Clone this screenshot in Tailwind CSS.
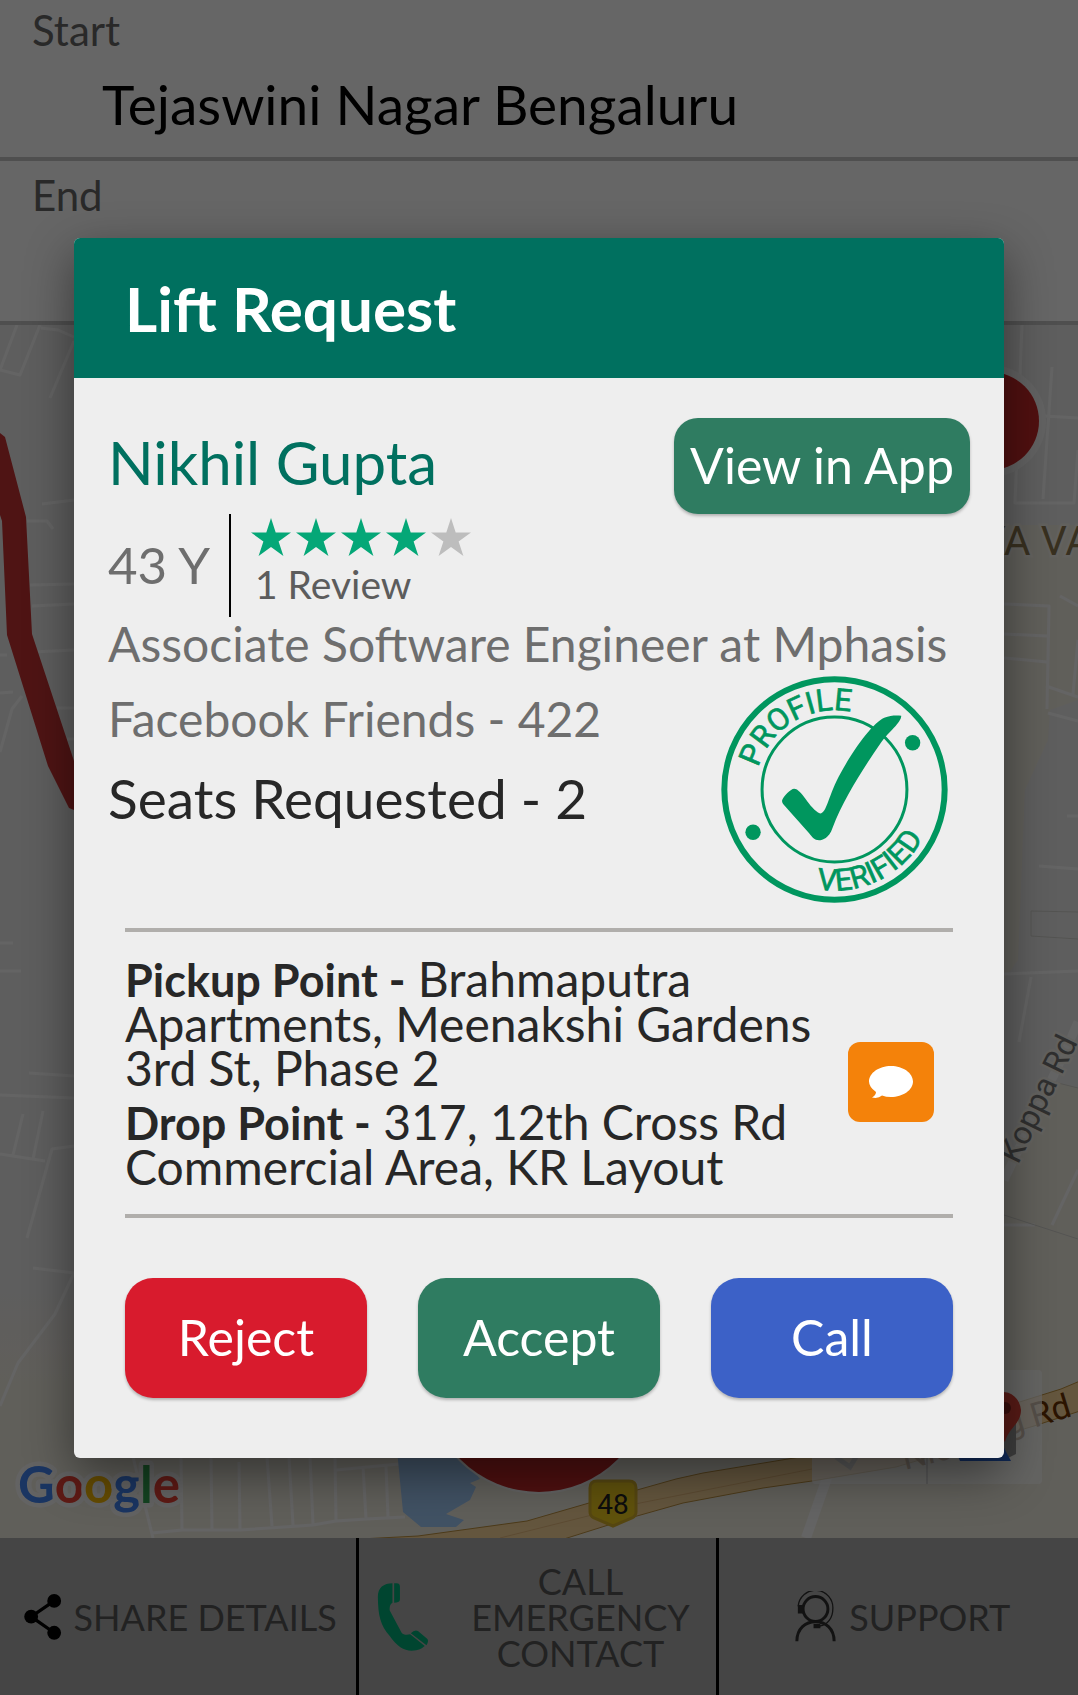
<!DOCTYPE html>
<html lang="en">
<head>
<meta charset="utf-8">
<meta name="viewport" content="width=device-width, initial-scale=1">
<title>Lift Request</title>
<script src="https://cdn.jsdelivr.net/npm/@tailwindcss/browser@4"></script>
</head>
<body class="relative flex min-h-screen flex-col bg-white font-['Lato',sans-serif]">

<!-- Trip screen behind the dialog -->
<main class="flex flex-1 flex-col">
  <section class="h-[161px] border-b-4 border-[#c6c6c6] px-8">
    <h2 class="pt-1 text-[42px] leading-[52px] text-[#676767]">Start</h2>
    <p class="pt-[22px] pl-[70px] text-[55px] leading-[52px] text-black">Tejaswini Nagar Bengaluru</p>
  </section>
  <section class="h-[164px] border-b-4 border-[#c6c6c6] px-8">
    <h2 class="pt-2 text-[42px] leading-[52px] text-[#676767]">End</h2>
  </section>

  <section class="min-h-[1213px] flex-1 bg-[#ebebeb]" aria-label="Map">
    <svg class="block h-full w-full" viewBox="0 325 1078 1213" preserveAspectRatio="xMidYMid slice">
      <defs>
        <linearGradient id="sand" x1="0" y1="0" x2="0" y2="1"><stop offset="0" stop-color="#ebebeb"/><stop offset=".4" stop-color="#f1ede2"/></linearGradient>
      </defs>
      <path d="M0 1280H600V1538H0Z" fill="url(#sand)"/>
      <path d="M990 525H1078V700L1050 710 1048 740 1025 790 1018 960 990 1000Z" fill="#f1ede2"/>
      <path d="M1078 1087L1054 1082 1030 1120 990 1190 400 1400V1538H1078Z" fill="#f1ede2"/>
      <g fill="none" stroke="#fafafa" stroke-width="3" stroke-linejoin="round">
        <path d="M17 325L0 370 20 375 40 325M41 328L58 330 74 337M74 341L50 398M42 504L74 500M27 521H47L53 529M30 585L74 584M32 606L74 604M0 655H7M33 652L74 650M57 708H74M67 739H74M0 693L13 692M0 752L12 709 22 696M0 943H13M0 971H21M29 1073L74 1076M0 1095L74 1098M0 1154L45 1161M23 1114L13 1155M43 1111L33 1159M27 1238L52 1149 74 1146M33 1268L74 1273 55 1314 18 1363 0 1406"/>
        <path d="M1022 324L1015 503H1074L1078 450M1052 367L1043 499M1045 416L1078 418M1004 604L1049 606 1047 709M1004 634L1047 636M1004 658L1047 662M1046 686L1078 697M1048 713L1078 721M1060 596L1078 606M1078 640L1073 694M1067 816H1078M1039 866L1078 869M1004 974L1078 971M1031 977L1019 1042M1004 1225H1035M1078 1170L1052 1225"/>
        <path d="M133 1457L153 1538M181 1457L182 1530M211 1457L212 1530M239 1462L240 1529M267 1457L272 1526M289 1457L293 1525M310 1457L313 1524M335 1457L336 1521M363 1466L366 1519M386 1466L388 1517M152 1533L182 1530 240 1530 313 1525 336 1521 366 1519 405 1517M336 1470L399 1464"/>
        <path d="M1078 1022L1068 1045 1004 1180" stroke-width="9"/>
        <path d="M828 1475L806 1538" stroke-width="10"/>
      </g>
      <path d="M1078 912L1031 911V936L1078 939M1054 1082L1078 1088M1004 1215L1078 1239" fill="none" stroke="#d2d2cd"/>
      <path d="M0 433L5 437 26 517 32 634 74 761V810L69 808 48 766 7 635 2 521 0 515Z" fill="#c63232"/>
      <circle cx="990" cy="421" r="56" fill="#f5f5f5"/>
      <circle cx="990" cy="421" r="49" fill="#c82828"/>
      <text x="981" y="555" font-family="Roboto" font-size="41" fill="#8c7850" stroke="#f5f2ea" stroke-width="5" paint-order="stroke">YA VA</text>
      <text transform="translate(1018 1165) rotate(-64)" font-family="Roboto" font-size="32" fill="#777" stroke="#f5f2ea" stroke-width="5" paint-order="stroke">Koppa Rd</text>
      <path d="M397 1450L403 1512 421 1527H456L464 1520 446 1514 470 1500 476 1487 470 1483 480 1479 458 1450Z" fill="#a3ccfa"/>
      <path d="M360 1539L418 1536 527 1521 589 1503 637 1490 676 1479 703 1473 800 1457 1010 1405 1061 1389 1080 1381V1411L1034 1426 896 1467 812 1481 763 1488 683 1503 637 1516 564 1539Z" fill="#fbd69c" stroke="#bd9240" stroke-width="1"/>
      <path d="M500 1538L640 1503 812 1469" fill="none" stroke="#e6bc7e"/>
      <circle cx="539" cy="1381" r="113" fill="#f5f5f5"/>
      <circle cx="539" cy="1381" r="111" fill="#c62828"/>
      <path d="M597 1481H629Q636 1481 636 1488V1512Q636 1516 632 1518L613 1526 594 1518Q590 1516 590 1512V1488Q590 1481 597 1481Z" fill="#f0cc1e" stroke="#d8b22c" stroke-width="3"/>
      <text x="613" y="1514" text-anchor="middle" font-family="Roboto" font-size="28" fill="#222">48</text>
      <g font-family="Roboto" font-size="34" fill="#6b3400">
        <text transform="translate(1073 1416) rotate(-17)" text-anchor="end">g Rd</text>
        <text transform="translate(905 1470) rotate(-14)">Nic</text>
      </g>
      <rect x="812" y="1370" width="230" height="114" rx="4" fill="#fff" fill-opacity=".7"/>
      <path d="M927 1372V1484" stroke="#ddd" stroke-width="2"/>
      <path d="M836 1457L850 1467 856 1457" fill="none" stroke="#ddd" stroke-width="5"/>
      <path d="M1000 1440L1016 1416V1454L1008 1458Z" fill="#999"/>
      <path d="M955 1450L1004 1448 1011 1461H960Z" fill="#2a66d8"/>
      <path d="M985 1414A18 20 0 0 1 1021 1410C1021 1424 1008 1428 1005 1442Z" fill="#db4437"/>
      <circle cx="1005" cy="1408" r="6" fill="#8c241e"/>
      <text x="18" y="1503" font-family="Lato" font-weight="700" font-size="51" stroke="#f8f8f8" stroke-width="9" stroke-linejoin="round" paint-order="stroke"><tspan fill="#4285f4">G</tspan><tspan fill="#ea4335">o</tspan><tspan fill="#fbbc05">o</tspan><tspan fill="#4285f4">g</tspan><tspan fill="#34a853">l</tspan><tspan fill="#ea4335">e</tspan></text>
    </svg>
  </section>

  <footer class="grid h-[157px] grid-cols-3 divide-x-3 divide-black bg-[#adadad] text-[36px] leading-9 text-[#555]">
    <button class="flex items-center justify-center gap-3 pl-1 whitespace-nowrap">
      <svg class="h-[46px] w-[38px] shrink-0" viewBox="84 434 112 140"><path d="M174 455L104 503 174 552" fill="none" stroke="#000" stroke-width="10"/><circle cx="174" cy="455" r="21"/><circle cx="104" cy="503" r="21"/><circle cx="174" cy="552" r="21"/></svg>
      SHARE DETAILS
    </button>
    <button class="flex items-center pl-[18px]">
      <svg class="h-[68px] w-[52px] shrink-0" viewBox="1094 404 150 200" fill="#00ad78"><path d="M1138 405C1112 405 1095 418 1095 445C1096 500 1102 527 1130 560C1150 590 1172 603 1194 603C1215 602 1225 596 1233 589L1190 555C1178 558 1170 556 1165 550L1130 485Q1128 468 1138 462ZM1143 405H1150Q1160 405 1160 415V452Q1160 461 1150 461L1143 462ZM1192 552Q1203 540 1213 545L1240 568Q1246 575 1238 587Z"/></svg>
      <span class="flex-1 pr-3 pl-7">CALL EMERGENCY CONTACT</span>
    </button>
    <button class="flex items-center justify-center gap-3 pl-2">
      <svg class="h-[51px] w-[43px] shrink-0" viewBox="763 728 124 156" fill="none" stroke="#2d2d2d" stroke-width="9"><circle cx="825" cy="783" r="38"/><path d="M768 882C768 842 795 822 825 822S882 842 882 882"/><path d="M772 775A53 53 0 0 1 878 783C878 810 862 832 838 835" stroke-width="4"/><path d="M771 771H787V797H771ZM819 829H840V842H819Z" fill="#2d2d2d" stroke="none"/></svg>
      SUPPORT
    </button>
  </footer>
</main>

<!-- Dialog -->
<div class="absolute inset-0 flex items-center justify-center bg-black/60 px-[74px]">
  <div role="dialog" aria-labelledby="dialog-title" class="w-full overflow-hidden rounded-md bg-[#eeeeee] shadow-[0_16px_48px_rgba(0,0,0,0.45)]">
    <header class="flex h-[140px] items-center bg-[#00705f] px-[51px]">
      <h1 id="dialog-title" class="text-[62px] leading-[72px] font-bold text-white">Lift Request</h1>
    </header>

    <section class="px-[34px] pt-10">
      <div class="flex h-24 items-center justify-between">
        <h2 class="pb-2 text-[60px] leading-[72px] text-[#00705f]">Nikhil Gupta</h2>
        <button class="h-24 w-[296px] rounded-3xl bg-[#2f7c61] text-[50px] whitespace-nowrap text-white shadow-[0_2px_3px_rgba(0,0,0,0.25)]">View in App</button>
      </div>
      <div class="flex h-[103px]">
        <p class="flex w-[123px] items-center border-r-2 border-black text-[51px] leading-[60px] whitespace-nowrap text-[#6e6e6e]">43 Y</p>
        <div class="pt-1 pl-5">
          <svg class="block h-[38px] w-[220px]" viewBox="0 0 220 38" role="img" aria-label="4 out of 5 stars">
            <defs><path id="star" d="M20 0L24.7 14.5H40L27.6 23.4 32.4 38 20 29 7.600 38 12.400 23.400 0 14.500H15.300Z"/></defs>
            <g fill="#04a777"><use href="#star"/><use href="#star" x="45"/><use href="#star" x="90"/><use href="#star" x="135"/></g>
            <use href="#star" x="180" fill="#bdbdbd"/>
          </svg>
          <p class="pt-1 pl-1 text-[39px] leading-[48px] text-[#5c5c5c]">1 Review</p>
        </div>
      </div>
      <p class="h-[59px] text-[48px] leading-[54px] whitespace-nowrap text-[#6e6e6e]">Associate Software Engineer at Mphasis</p>
      <div class="flex justify-between pr-[22px]">
        <div class="pt-4">
          <p class="text-[48px] leading-[54px] text-[#6e6e6e]">Facebook Friends - 422</p>
          <p class="pt-[22px] text-[55px] leading-[60px] text-[#272727]">Seats Requested - 2</p>
        </div>
        <svg class="size-[227px]" viewBox="186 825 680 680" role="img" aria-label="Profile verified" fill="#00965e">
          <defs><path id="arc-top" d="M298 1100A237 237 0 0 1 763 1165"/><path id="arc-bottom" d="M473 1463A303 303 0 0 0 829 1165"/></defs>
          <g fill="none" stroke="#00965e"><circle cx="526" cy="1165" r="330" stroke-width="18"/><circle cx="526" cy="1165" r="217" stroke-width="9"/></g>
          <circle cx="760" cy="1025" r="23"/><circle cx="282" cy="1293" r="23"/>
          <path d="M370 1195C375 1185 395 1163 405 1163C428 1163 450 1223 483 1237C503 1237 508 1180 545 1115C580 1050 640 965 675 950C695 942 712 943 726 944C726 965 690 990 665 1025C610 1105 555 1190 520 1280C510 1310 490 1317 480 1317C465 1317 460 1308 450 1296L378 1215C370 1207 367 1201 370 1195Z"/>
          <g font-family="Roboto" stroke="#00965e" stroke-width="2"><text font-size="92"><textPath href="#arc-top">PROFILE</textPath></text><text font-size="91"><textPath href="#arc-bottom">VERIFIED</textPath></text></g>
        </svg>
      </div>
    </section>

    <section class="mx-[51px] mt-[25px] flex h-[290px] items-center border-y-4 border-[#b0aeab] pr-[19px]">
      <div class="flex-1 text-[48px] leading-[44px] text-[#272727]">
        <p class="max-w-[700px]"><b class="text-[45px]">Pickup Point -</b> Brahmaputra Apartments, Meenakshi Gardens 3rd St, Phase 2</p>
        <p class="max-w-[700px] pt-[10px]"><b class="text-[45px]">Drop Point -</b> 317, 12th Cross Rd Commercial Area, KR Layout</p>
      </div>
      <button aria-label="Chat" class="mt-[18px] flex h-20 w-[86px] shrink-0 items-center justify-center rounded-xl bg-[#f4820a]">
        <svg class="h-8 w-[44px]" viewBox="0 0 44 32" fill="#fff"><path d="M22 0C34 0 44 7 44 15.500S34 31 22 31Q17 31 13 29.500Q9 33 3 31.500Q7 29 7 26Q0 21 0 15.500C0 7 10 0 22 0Z"/></svg>
      </button>
    </section>

    <div class="grid grid-cols-3 gap-[51px] px-[51px] py-[60px] text-[50px] text-white">
      <button class="h-[120px] rounded-[28px] bg-[#d81b2d] shadow-[0_2px_3px_rgba(0,0,0,0.25)]">Reject</button>
      <button class="h-[120px] rounded-[28px] bg-[#2f7c61] shadow-[0_2px_3px_rgba(0,0,0,0.25)]">Accept</button>
      <button class="h-[120px] rounded-[28px] bg-[#3c61c7] shadow-[0_2px_3px_rgba(0,0,0,0.25)]">Call</button>
    </div>
  </div>
</div>
</body>
</html>
